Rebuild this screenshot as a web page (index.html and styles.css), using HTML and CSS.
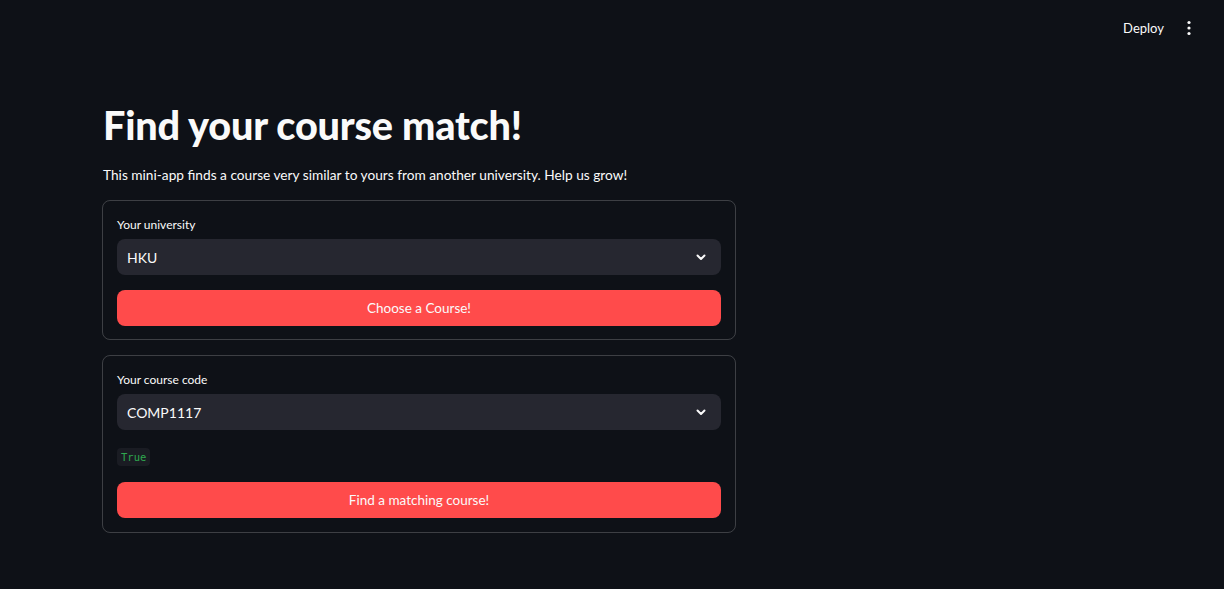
FILE: index.html
```html
<!DOCTYPE html>
<html lang="en">
<head>
<meta charset="utf-8">
<title>Find your course match!</title>
<link rel="stylesheet" href="styles.css">
</head>
<body>
<header class="topbar">
  <span class="deploy">Deploy</span>
  <span class="menu" aria-label="menu">
    <svg width="16" height="16" viewBox="0 0 16 16"><circle cx="8" cy="2.5" r="1.6" fill="#fafafa"/><circle cx="8" cy="8" r="1.6" fill="#fafafa"/><circle cx="8" cy="13.5" r="1.6" fill="#fafafa"/></svg>
  </span>
</header>
<main class="main">
  <h1 class="title">Find your course match!</h1>
  <p class="intro">This mini-app finds a course very similar to yours from another university. Help us grow!</p>

  <section class="card">
    <label class="label">Your university</label>
    <div class="select">
      <span class="value">HKU</span>
      <svg class="chev" width="12" height="12" viewBox="0 0 12 12"><path d="M2.5 4.5 L6 8 L9.5 4.5" fill="none" stroke="#fafafa" stroke-width="2" stroke-linecap="round" stroke-linejoin="round"/></svg>
    </div>
    <button class="btn">Choose a Course!</button>
  </section>

  <section class="card card-code">
    <label class="label">Your course code</label>
    <div class="select">
      <span class="value">COMP1117</span>
      <svg class="chev" width="12" height="12" viewBox="0 0 12 12"><path d="M2.5 4.5 L6 8 L9.5 4.5" fill="none" stroke="#fafafa" stroke-width="2" stroke-linecap="round" stroke-linejoin="round"/></svg>
    </div>
    <div class="code-row"><code class="code">True</code></div>
    <button class="btn">Find a matching course!</button>
  </section>
</main>
</body>
</html>
```

FILE: styles.css
```css
* { box-sizing: border-box; }
html, body { margin: 0; padding: 0; }
body {
  background: #0e1117;
  color: #fafafa;
  font-family: "Lato", "Liberation Sans", sans-serif;
  height: 589px;
  overflow: hidden;
}
.topbar {
  height: 55px;
  display: flex;
  align-items: center;
  justify-content: flex-end;
  padding-right: 27px;
  gap: 17px;
}
.deploy { font-size: 13px; }
.menu { display: flex; align-items: center; }
.main {
  width: 634px;
  margin-left: 102px;
  display: flex;
  flex-direction: column;
}
.title {
  margin: 46px 0 0 1px;
  font-size: 39.6px;
  font-weight: 900;
  line-height: 48px;
  letter-spacing: -0.2px;
}
.intro {
  margin: 16px 0 15px 1px;
  font-size: 13.7px;
  line-height: 20px;
}
.card {
  border: 1px solid rgba(250,250,250,0.2);
  border-radius: 8px;
  padding: 14px 14px 13px;
  display: flex;
  flex-direction: column;
  margin-bottom: 15px;
}
.card-code { padding-bottom: 14px; }
.label {
  font-size: 12px;
  line-height: 20px;
  margin-bottom: 4px;
}
.select {
  height: 36px;
  background: #262730;
  border-radius: 8px;
  display: flex;
  align-items: center;
  justify-content: space-between;
  padding: 0 14px 0 10px;
}
.value { font-size: 14px; }
.chev { display: block; }
.btn {
  margin-top: 15px;
  height: 36px;
  border: none;
  border-radius: 8px;
  background: #ff4b4b;
  color: #fafafa;
  font-family: inherit;
  font-size: 13.5px;
}
.code-row { margin-top: 18px; display: flex; }
.code {
  font-family: "DejaVu Sans Mono", monospace;
  font-size: 10.5px;
  line-height: 18px;
  padding: 0 4px;
  border-radius: 4px;
  background: #1a1c23;
  color: #2fa84f;
}
.code-row + .btn { margin-top: 16px; }
```
